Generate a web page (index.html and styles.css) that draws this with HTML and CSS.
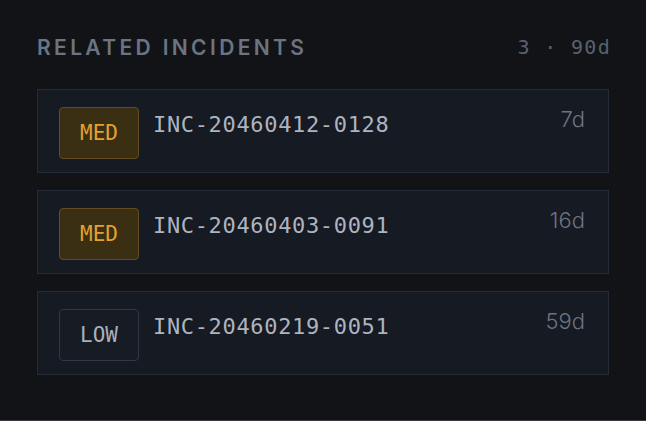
FILE: index.html
```html
<!DOCTYPE html>
<html lang="en">
<head>
    <meta charset="UTF-8">
    <meta name="viewport" content="width=device-width, initial-scale=1.0">
    <title>Related Incidents</title>
    <link rel="stylesheet" href="styles.css">
</head>
<body>
    <div class="panel">
        <div class="panel-header">
            <h2>Related Incidents</h2>
            <span class="summary">3 · 90d</span>
        </div>

        <div class="incident-list">
            <!--incident 1-->
            <div class="incident">
                <span class="badge badge-med">MED</span>
                <span class="incident-id">INC-20460412-0128</span>
                <span class="age">7d</span>
            </div>

            <!--incident 2-->
            <div class="incident">
                <span class="badge badge-med">MED</span>
                <span class="incident-id">INC-20460403-0091</span>
                <span class="age">16d</span>
            </div>

            <!--incident 3-->
            <div class="incident">
                <span class="badge badge-low">LOW</span>
                <span class="incident-id">INC-20460219-0051</span>
                <span class="age">59d</span>
            </div>
        </div>
    </div>
</body>
</html>
```

FILE: styles.css
```css
body {
    margin: 0;
    background-color: #3a3d43;
    font-family: Inter, "Noto Sans", sans-serif;
}
.panel {
    box-sizing: border-box;
    width: 646px;
    height: 420px;
    padding: 33px 37px 0 37px;
    background-color: #111317;
}
.panel-header {
    display: flex;
    justify-content: space-between;
    align-items: center;
    height: 28px;
    margin-bottom: 28px;
}
.panel-header h2 {
    margin: 0;
    font-size: 21px;
    font-weight: 600;
    letter-spacing: 0.16em;
    text-transform: uppercase;
    color: #6b7482;
}
.summary {
    font-family: "DejaVu Sans Mono", monospace;
    font-size: 20px;
    letter-spacing: 1.3px;
    margin-right: -2px;
    color: #59616e;
}
.incident-list {
    display: flex;
    flex-direction: column;
    gap: 17px;
}
.incident {
    display: flex;
    align-items: flex-start;
    height: 84px;
    box-sizing: border-box;
    padding: 17px 23px 0 21px;
    background-color: #161a22;
    border: 1px solid #232b39;
}
.badge {
    box-sizing: border-box;
    width: 80px;
    height: 52px;
    display: flex;
    align-items: center;
    justify-content: center;
    border-radius: 4px;
    font-family: "DejaVu Sans Mono", monospace;
    font-size: 21px;
}
.badge-med {
    background-color: #3a2e13;
    border: 1px solid #634d20;
    color: #e3a230;
}
.badge-low {
    background-color: #171b23;
    border: 1px solid #303845;
    color: #a9b0bb;
}
.incident-id {
    margin-left: 14px;
    margin-top: 5px;
    font-family: "DejaVu Sans Mono", monospace;
    font-size: 22px;
    letter-spacing: 0.03em;
    color: #adb4c0;
}
.age {
    margin-left: auto;
    margin-top: -1px;
    font-size: 22px;
    font-weight: 300;
    color: #6b7483;
}
```
